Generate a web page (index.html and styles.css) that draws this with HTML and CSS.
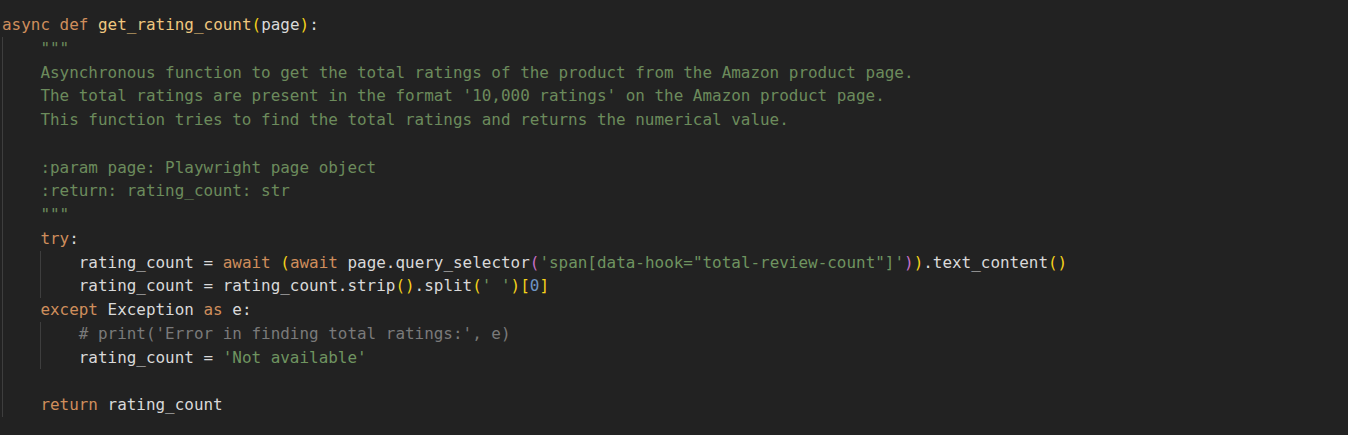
FILE: index.html
```html
<!DOCTYPE html>
<html>
<head>
<meta charset="utf-8">
<link rel="stylesheet" href="styles.css">
</head>
<body>
<div class="editor">
  <div class="line"><span class="kw">async</span> <span class="kw">def</span> <span class="fn">get_rating_count</span><span class="p1">(</span>page<span class="p1">)</span>:</div>
  <div class="line"><span class="ind"></span><span class="doc">"""</span></div>
  <div class="line"><span class="ind"></span><span class="doc">Asynchronous function to get the total ratings of the product from the Amazon product page.</span></div>
  <div class="line"><span class="ind"></span><span class="doc">The total ratings are present in the format '10,000 ratings' on the Amazon product page.</span></div>
  <div class="line"><span class="ind"></span><span class="doc">This function tries to find the total ratings and returns the numerical value.</span></div>
  <div class="line"><span class="ind"></span></div>
  <div class="line"><span class="ind"></span><span class="doc">:param page: Playwright page object</span></div>
  <div class="line"><span class="ind"></span><span class="doc">:return: rating_count: str</span></div>
  <div class="line"><span class="ind"></span><span class="doc">"""</span></div>
  <div class="line"><span class="ind"></span><span class="kw">try</span>:</div>
  <div class="line"><span class="ind"></span><span class="ind"></span>rating_count = <span class="kw">await</span> <span class="p1">(</span><span class="kw">await</span> page.query_selector<span class="p2">(</span><span class="str">'span[data-hook="total-review-count"]'</span><span class="p2">)</span><span class="p1">)</span>.text_content<span class="p1">()</span></div>
  <div class="line"><span class="ind"></span><span class="ind"></span>rating_count = rating_count.strip<span class="p1">()</span>.split<span class="p1">(</span><span class="str">' '</span><span class="p1">)</span><span class="p1">[</span><span class="num">0</span><span class="p1">]</span></div>
  <div class="line"><span class="ind"></span><span class="kw">except</span> Exception <span class="kw">as</span> e:</div>
  <div class="line"><span class="ind"></span><span class="ind"></span><span class="cm"># print('Error in finding total ratings:', e)</span></div>
  <div class="line"><span class="ind"></span><span class="ind"></span>rating_count = <span class="str">'Not available'</span></div>
  <div class="line"><span class="ind"></span></div>
  <div class="line"><span class="ind"></span><span class="kw">return</span> rating_count</div>
</div>
</body>
</html>
```
FILE: styles.css
```css
html, body {
  margin: 0;
  padding: 0;
  background: #222222;
}
.editor {
  padding: 13px 0 0 2px;
  font-family: "DejaVu Sans Mono", "Liberation Mono", monospace;
  font-size: 15.94px;
  color: #d9d9d9;
}
.line {
  height: 23.75px;
  line-height: 23.75px;
  white-space: pre;
}
.ind {
  display: inline-block;
  vertical-align: top;
  width: 4ch;
  height: 23.75px;
  box-sizing: border-box;
  border-left: 1px solid #3e3e3e;
}
.kw { color: #cf8e5c; }
.fn { color: #f0c77f; }
.p1 { color: #f5d21a; }
.p2 { color: #c86fc6; }
.doc { color: #6c8b5c; }
.str { color: #6f9460; }
.cm { color: #7a7a7a; }
.num { color: #6f95c2; }
```
